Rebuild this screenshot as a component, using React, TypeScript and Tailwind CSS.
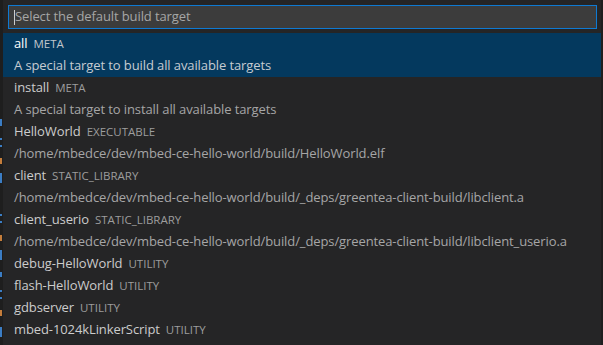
import React from "react";

type Target = { name: string; kind: string; detail?: string };

const targets: Target[] = [
  { name: "all", kind: "META", detail: "A special target to build all available targets" },
  { name: "install", kind: "META", detail: "A special target to install all available targets" },
  { name: "HelloWorld", kind: "EXECUTABLE", detail: "/home/mbedce/dev/mbed-ce-hello-world/build/HelloWorld.elf" },
  { name: "client", kind: "STATIC_LIBRARY", detail: "/home/mbedce/dev/mbed-ce-hello-world/build/_deps/greentea-client-build/libclient.a" },
  { name: "client_userio", kind: "STATIC_LIBRARY", detail: "/home/mbedce/dev/mbed-ce-hello-world/build/_deps/greentea-client-build/libclient_userio.a" },
  { name: "debug-HelloWorld", kind: "UTILITY" },
  { name: "flash-HelloWorld", kind: "UTILITY" },
  { name: "gdbserver", kind: "UTILITY" },
  { name: "mbed-1024kLinkerScript", kind: "UTILITY" },
];

// bits of the editor peeking out on the left
const bits = [
  { top: 119, h: 7, c: "bg-[#3b7dc4]" },
  { top: 138, h: 2, c: "bg-[#3b7dc4]" },
  { top: 145, h: 2, c: "bg-[#3b7dc4]" },
  { top: 158, h: 6, c: "bg-[#c47d3b]" },
  { top: 173, h: 10, c: "bg-[#3b7dc4]" },
  { top: 214, h: 2, c: "bg-[#3b7dc4]" },
  { top: 221, h: 2, c: "bg-[#3b7dc4]" },
  { top: 235, h: 6, c: "bg-[#c47d3b]" },
  { top: 250, h: 10, c: "bg-[#3b7dc4]" },
  { top: 272, h: 5, c: "bg-[#3b7dc4]" },
  { top: 290, h: 2, c: "bg-[#3b7dc4]" },
  { top: 297, h: 2, c: "bg-[#3b7dc4]" },
  { top: 310, h: 6, c: "bg-[#c47d3b]" },
  { top: 327, h: 10, c: "bg-[#3b7dc4]" },
];

function Row({ t, selected }: { t: Target; selected: boolean }) {
  return (
    <div className={`pl-[11px] ${selected ? "bg-[#04395e]" : ""}`}>
      <div className="h-[22px] flex items-center gap-[6px] whitespace-nowrap">
        <span className={`text-[13px] tracking-[-0.1px] ${selected ? "text-white" : "text-[#cccccc]"}`}>{t.name}</span>
        <span className={`text-[11.5px] ${selected ? "text-[#c0c6cc]" : "text-[#9d9d9d]"}`}>{t.kind}</span>
      </div>
      {t.detail && (
        <div
          className={`h-[22px] flex items-center text-[13px] tracking-[-0.1px] whitespace-nowrap ${
            selected ? "text-[#c6ccd2]" : "text-[#a6a6a6]"
          }`}
        >
          {t.detail}
        </div>
      )}
    </div>
  );
}

export default function App() {
  return (
    <div
      className="w-[603px] h-[345px] flex bg-[#1e1e1e] overflow-hidden"
      style={{ fontFamily: '"Open Sans", "Noto Sans", sans-serif' }}
    >
      <div className="relative w-[3px] shrink-0">
        {bits.map((b, i) => (
          <div key={i} className={`absolute left-0 w-[2px] ${b.c}`} style={{ top: b.top, height: b.h }} />
        ))}
      </div>
      <div className="w-[598px] shrink-0 bg-[#252526] flex flex-col">
        <div className="pt-[5px] pl-[5px] pr-[4px] pb-[4px]">
          <div className="h-[24px] border border-[#0e7ad3] bg-[#3c3c3c] flex items-center pl-[5px]">
            <span className="w-px h-[15px] bg-[#cccccc]" />
            <span className="text-[13px] tracking-[-0.1px] text-[#a6a6a6]">Select the default build target</span>
          </div>
        </div>
        <div className="flex flex-col">
          {targets.map((t, i) => (
            <Row key={t.name} t={t} selected={i === 0} />
          ))}
        </div>
      </div>
    </div>
  );
}
